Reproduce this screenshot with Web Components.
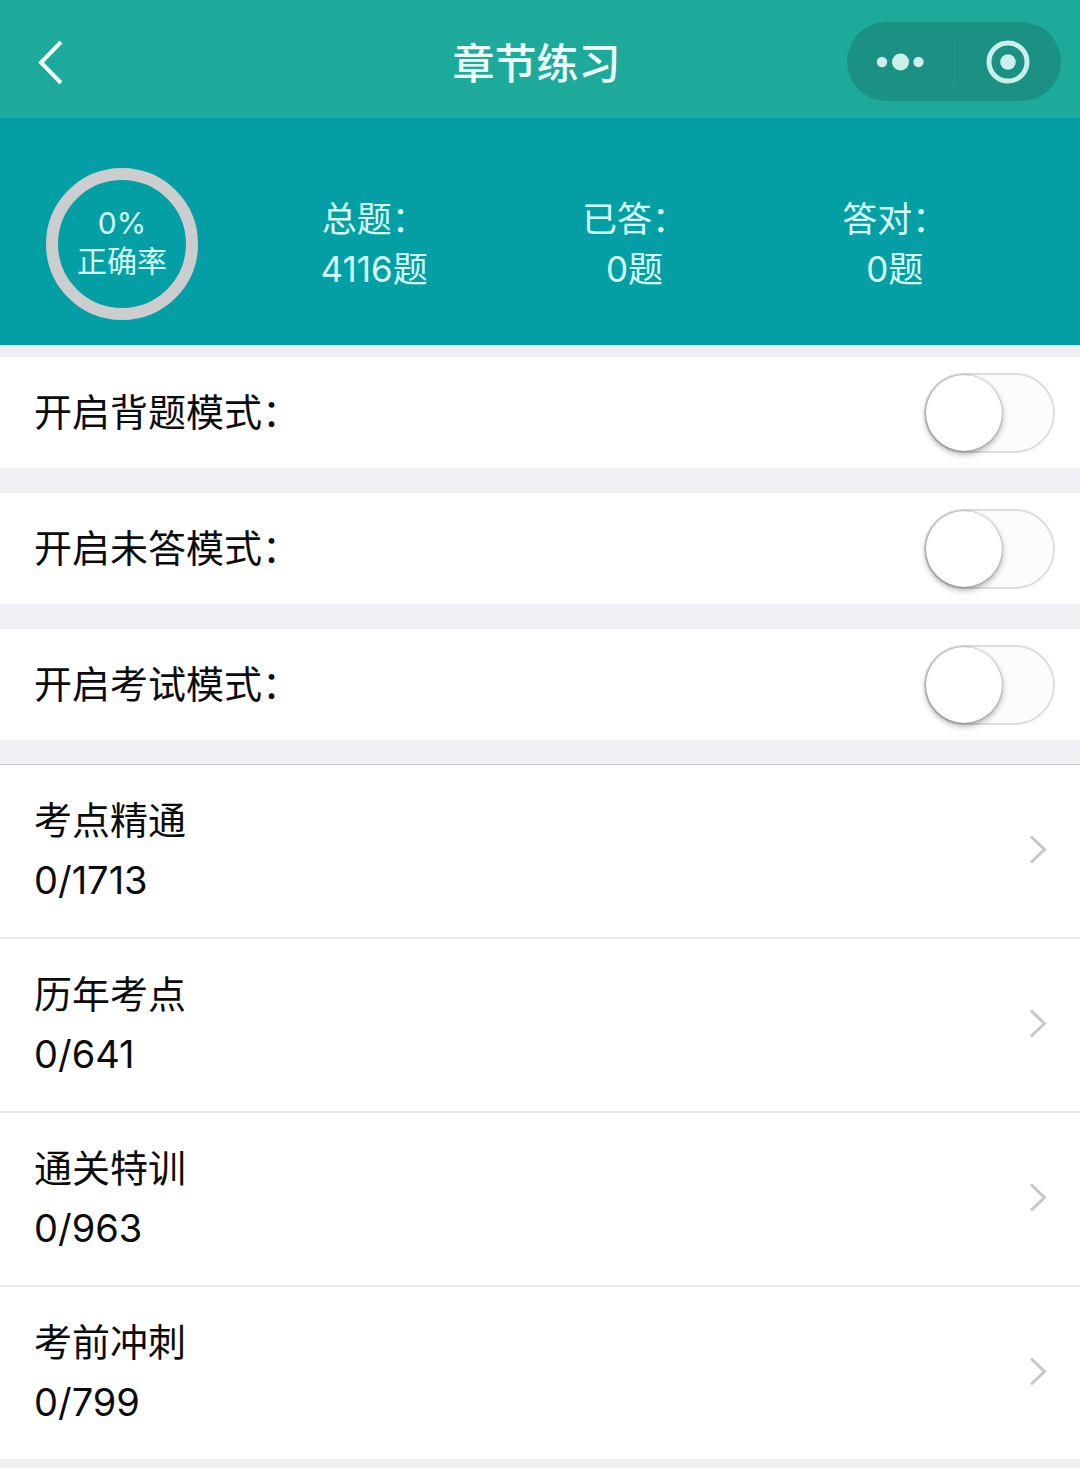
<!DOCTYPE html>
<html lang="zh-CN">
<head>
<meta charset="utf-8">
<meta name="viewport" content="width=device-width, initial-scale=1">
<title>章节练习</title>
<style>
  body { margin: 0; background: #efeff4; color: #0c0c0c; font-family: Inter, "Noto Sans CJK SC", sans-serif; }
</style>
</head>
<body>
<practice-page></practice-page>

<script>
const define = (name, html, setup) => {
  const template = document.createElement('template');
  template.innerHTML = html;
  customElements.define(name, class extends HTMLElement {
    connectedCallback() {
      if (this.shadowRoot) return;
      this.attachShadow({ mode: 'open' }).append(template.content.cloneNode(true));
      if (setup) setup(this, this.shadowRoot);
    }
  });
};

define('nav-bar', `
  <style>
    :host { display: grid; grid-template-columns: 1fr auto 1fr; align-items: center; height: 118px;
      padding: 5px 19px 0 12px; box-sizing: border-box; background: #1daa9a; color: #effffd; }
    button { appearance: none; border: 0; margin: 0; padding: 0; background: none; color: inherit; cursor: pointer; }
    svg { display: block; }
    .back { justify-self: start; width: 76px; height: 76px; }
    h1 { margin: 0; padding-top: 4px; font-size: 42px; line-height: 60px; font-weight: 500; }
    .capsule { justify-self: end; display: flex; align-items: center; width: 214px; height: 79px;
      border-radius: 40px; background: #1a9182; color: #ccefeb; }
    .capsule button { flex: 1; display: flex; justify-content: center; }
    .line { width: 1px; height: 48px; background: #23998b; }
  </style>
  <button class="back" aria-label="返回"><svg width="76" height="76" viewBox="0 0 76 76" fill="none" stroke="currentColor" stroke-width="4"><path d="M49 18 29 38.500 49 59"/></svg></button>
  <h1><slot></slot></h1>
  <div class="capsule">
    <button aria-label="更多"><svg width="48" height="20" viewBox="0 0 48 20" fill="currentColor"><circle cx="6" cy="10" r="5.200"/><circle cx="24.500" cy="10" r="8.500"/><circle cx="42.500" cy="10" r="5.200"/></svg></button>
    <span class="line"></span>
    <button aria-label="关闭"><svg width="44" height="44" viewBox="0 0 44 44"><circle cx="22" cy="22" r="19" fill="none" stroke="currentColor" stroke-width="5"/><circle cx="22" cy="22" r="7.800" fill="currentColor"/></svg></button>
  </div>`);

define('accuracy-ring', `
  <style>
    :host { display: flex; flex-direction: column; align-items: center; justify-content: center; width: 152px; height: 152px;
      padding-bottom: 4px; box-sizing: border-box; border: 12px solid #cbcdce; border-radius: 50%; font-size: 30px; line-height: 38px; }
  </style>
  <slot name="value"></slot>
  <slot></slot>`);

define('stat-item', `
  <style>
    :host { display: block; flex: 1; text-align: center; font-size: 35px; line-height: 50px; }
  </style>
  <div><slot name="label"></slot></div>
  <div><slot></slot></div>`);

define('stats-panel', `
  <style>
    :host { display: flex; align-items: center; padding: 50px 55px 25px 0; background: #049fa4; color: #d6fffd; }
    .ring { display: flex; justify-content: center; width: 244px; }
    .items { display: flex; flex: 1; }
  </style>
  <div class="ring"><slot name="ring"></slot></div>
  <div class="items"><slot></slot></div>`);

define('switch-row', `
  <style>
    :host { display: block; background: #fff; }
    label { display: flex; align-items: center; justify-content: space-between; height: 111px; padding: 0 25px 0 34px;
      font-size: 38px; line-height: 60px; }
    span { padding-bottom: 2px; }
    input { appearance: none; flex: none; width: 131px; height: 80px; margin: 0; border: 2px solid #dedede;
      border-radius: 40px; background: #fcfcfc; cursor: pointer; }
    input::before { content: ""; display: block; width: 76px; height: 76px; border-radius: 50%; background: #fff;
      box-shadow: 0 0 2px rgba(0,0,0,.35), 0 3px 6px rgba(0,0,0,.35); }
    input:checked { background: #1daa9a; }
    input:checked::before { margin-left: auto; }
  </style>
  <label><span><slot></slot></span><input type="checkbox" role="switch"></label>`,
  (host, root) => { root.querySelector('input').setAttribute('aria-label', host.textContent.trim()); });

define('chapter-row', `
  <style>
    :host { display: block; background: #fff; border-bottom: 2px solid #e8e8ea; }
    :host(:last-of-type) { border-bottom: 0; }
    a { display: flex; align-items: center; justify-content: space-between; padding: 25px 32px 27px 34px; color: inherit;
      text-decoration: none; font-size: 38px; line-height: 60px; }
    .text { display: flex; flex-direction: column; }
    svg { display: block; flex: none; }
  </style>
  <a href="#">
    <span class="text"><span><slot></slot></span><span><slot name="count"></slot></span></span>
    <svg width="19" height="32" viewBox="0 0 19 32" fill="none" stroke="#c7c7c7" stroke-width="3"><path d="M2 2.500 15.500 15.500 2 28.500"/></svg>
  </a>`);

define('practice-page', `
  <style>
    :host { display: block; padding-bottom: 9px; }
    .switches { display: flex; flex-direction: column; gap: 25px; padding: 12px 0 24px; }
    .chapters { border-top: 1px solid #c8c7cc; }
  </style>
  <nav-bar>章节练习</nav-bar>
  <stats-panel>
    <accuracy-ring slot="ring"><span slot="value">0%</span>正确率</accuracy-ring>
    <stat-item><span slot="label">总题：</span>4116题</stat-item>
    <stat-item><span slot="label">已答：</span>0题</stat-item>
    <stat-item><span slot="label">答对：</span>0题</stat-item>
  </stats-panel>
  <div class="switches">
    <switch-row>开启背题模式：</switch-row>
    <switch-row>开启未答模式：</switch-row>
    <switch-row>开启考试模式：</switch-row>
  </div>
  <div class="chapters">
    <chapter-row>考点精通<span slot="count">0/1713</span></chapter-row>
    <chapter-row>历年考点<span slot="count">0/641</span></chapter-row>
    <chapter-row>通关特训<span slot="count">0/963</span></chapter-row>
    <chapter-row>考前冲刺<span slot="count">0/799</span></chapter-row>
  </div>`);
</script>
</body>
</html>
